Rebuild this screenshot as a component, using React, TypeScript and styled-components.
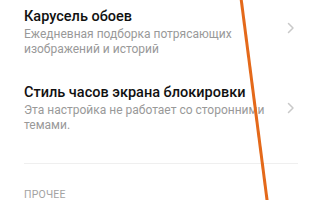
import React from "react";
import styled, { createGlobalStyle } from "styled-components";

const Global = createGlobalStyle`
  html, body { margin: 0; padding: 0; background: #ffffff; }
  body { width: 320px; height: 200px; overflow: hidden; font-family: Roboto, "Noto Sans", sans-serif; }
`;

const Page = styled.div`
  position: relative;
  width: 320px;
  height: 200px;
  overflow: hidden;
  background: #ffffff;
`;

const List = styled.div`
  display: flex;
  flex-direction: column;
  gap: 26px;
  padding: 7px 0 0 24px;
`;

const Item = styled.div`
  display: flex;
  align-items: center;
  padding-right: 25px;
`;

const Texts = styled.div`
  flex: 1;
  display: flex;
  flex-direction: column;
`;

const Title = styled.div`
  font-size: 14.5px;
  font-weight: 500;
  line-height: 20px;
  color: #111111;
  white-space: nowrap;
`;

const Subtitle = styled.div`
  font-size: 12px;
  line-height: 15px;
  color: #999999;
  max-width: 242px;
`;

const Chevron = styled.svg<{ $shift: number }>`
  flex: none;
  width: 8px;
  height: 12px;
  transform: translateY(${(p) => p.$shift}px);
`;

const Divider = styled.div`
  height: 1px;
  background: #efefef;
  margin: 30px 22px 0 24px;
`;

const SectionHeader = styled.div`
  padding: 26px 0 0 24px;
  font-size: 10.5px;
  line-height: 10px;
  color: #a3a3a3;
  letter-spacing: 0.2px;
`;

const Overlay = styled.svg`
  position: absolute;
  left: 0;
  top: 0;
  pointer-events: none;
`;

const Arrow = ({ shift }: { shift: number }) => (
  <Chevron $shift={shift} viewBox="0 0 8 12">
    <polyline points="1.5,1.5 6,6 1.5,10.5" fill="none" stroke="#c9c9c9" strokeWidth="1.5" strokeLinecap="round" strokeLinejoin="round" />
  </Chevron>
);

const items = [
  {
    title: "Карусель обоев",
    sub: "Ежедневная подборка потрясающих изображений и историй",
    shift: -4,
  },
  {
    title: "Стиль часов экрана блокировки",
    sub: "Эта настройка не работает со сторонними темами.",
    shift: 0,
  },
];

export default function App() {
  return (
    <Page>
      <Global />
      <List>
        {items.map((it) => (
          <Item key={it.title}>
            <Texts>
              <Title>{it.title}</Title>
              <Subtitle>{it.sub}</Subtitle>
            </Texts>
            <Arrow shift={it.shift} />
          </Item>
        ))}
      </List>
      <Divider />
      <SectionHeader>ПРОЧЕЕ</SectionHeader>
      <Overlay width="320" height="200" viewBox="0 0 320 200">
        <line x1="241" y1="-2" x2="267.3" y2="202" stroke="#e4691a" strokeWidth="3" />
      </Overlay>
    </Page>
  );
}
